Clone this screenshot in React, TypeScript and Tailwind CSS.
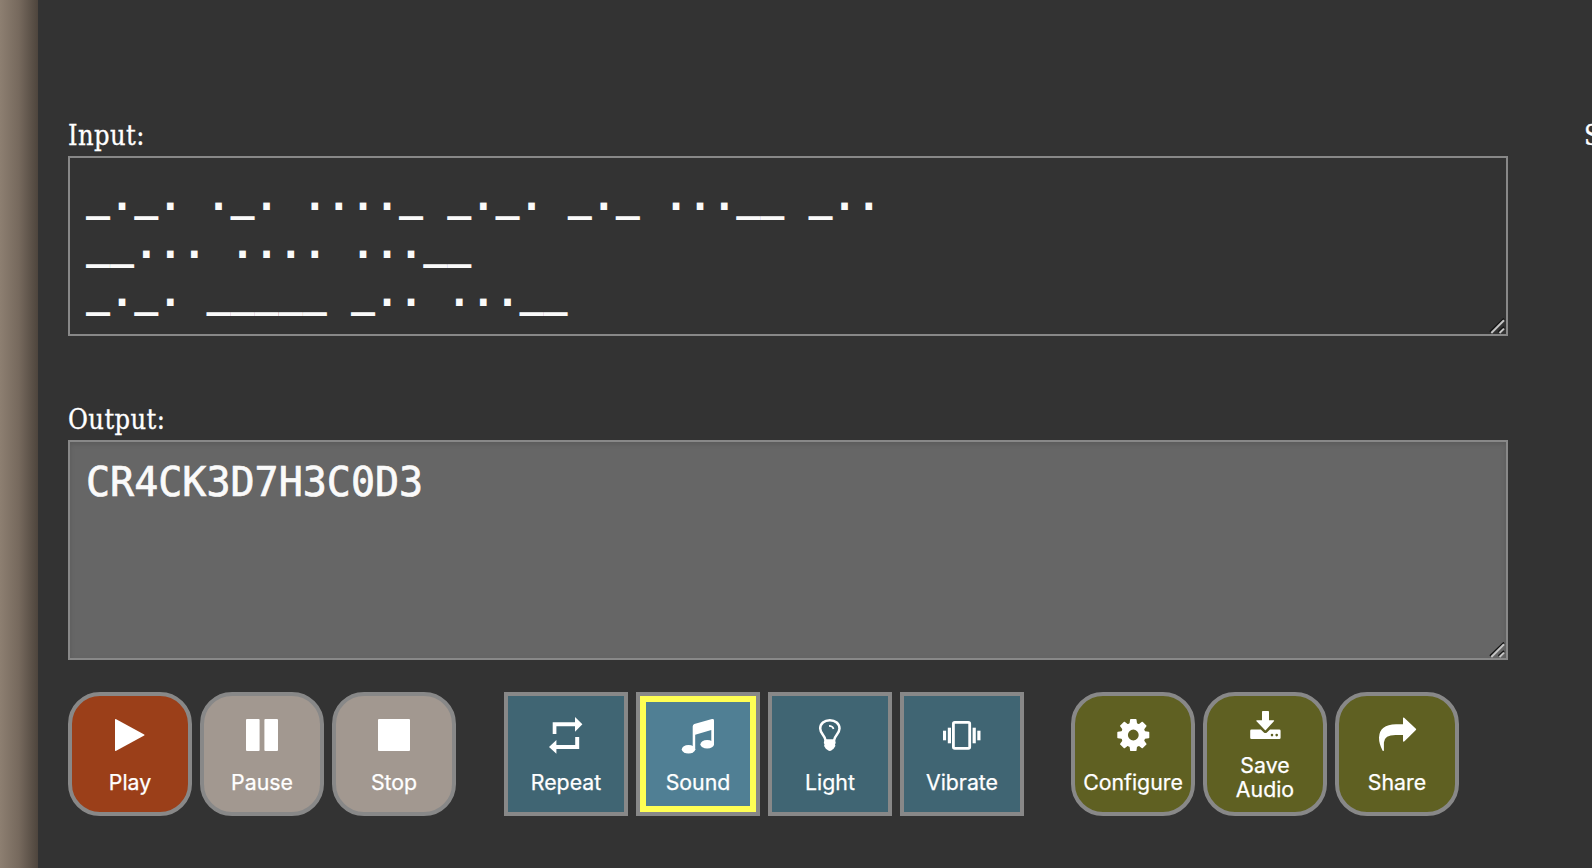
import type { ReactNode } from "react";

const icon = (children: ReactNode) => (
  <svg width="40" height="40" viewBox="0 0 40 40" fill="currentColor" className="shrink-0 overflow-visible">
    {children}
  </svg>
);

const PlayIcon = icon(<path d="M5 5.8Q5 4.6 6.2 5.2L34.2 20.5Q35 21 34.2 21.5L6.2 36.8Q5 37.4 5 36.2Z" />);
const PauseIcon = icon(
  <>
    <rect x="4" y="5" width="13.6" height="32" rx="1" />
    <rect x="22.4" y="5" width="13.6" height="32" rx="1" />
  </>
);
const StopIcon = icon(<rect x="4" y="5" width="32" height="32" rx="1" />);
const RepeatIcon = icon(
  <>
    <path d="M6.7 19.9V8.2H29V3L36.4 10.3L29 17.7V12.2H10.4V19.9Z" />
    <path d="M33.2 23V35H10.4V39.8L3 33L10.4 26V31H29.2V23Z" />
  </>
);
const SoundIcon = icon(
  <>
    <path d="M14.7 36V12.4Q14.7 10.7 16.3 10.1L34 5.1Q36 4.6 36 6.4V30.5H33.3V16L17.2 20.8V36Z" />
    <ellipse cx="10.5" cy="35.3" rx="6.7" ry="4.3" />
    <ellipse cx="29.2" cy="30.2" rx="6.8" ry="4.3" />
  </>
);
const LightIcon = icon(
  <>
    <path
      d="M15.6 26.5C15.2 21.5 10.2 19.7 10.2 14.6C10.2 9.6 14.3 6.2 19.8 6.2S29.5 9.6 29.5 14.6C29.5 19.7 24.4 21.5 24 26.5"
      fill="none"
      stroke="currentColor"
      strokeWidth="2.5"
    />
    <path d="M14.5 25.3H25L25.7 29L25 30.3L25.4 32L23.4 35Q22.5 35.5 21.7 36.3Q19.8 37.7 17.9 36.3Q17 35.5 16 35L14.1 32L14.5 30.3L13.8 29Z" />
    <path d="M19 11.9Q22.6 11.9 23.6 14.9" fill="none" stroke="currentColor" strokeWidth="1.6" />
  </>
);
const VibrateIcon = icon(
  <>
    <rect x="11.4" y="8.4" width="16.3" height="26" rx="1.4" fill="none" stroke="currentColor" strokeWidth="2.8" />
    <rect x="1" y="16.7" width="3.1" height="9.6" />
    <rect x="5.8" y="13.7" width="3.2" height="15.6" />
    <rect x="30.6" y="13.7" width="3.2" height="15.6" />
    <rect x="35.3" y="16.7" width="3.2" height="9.6" />
  </>
);
const ConfigureIcon = icon(
  <>
    <circle cx="20.3" cy="21" r="8.8" fill="none" stroke="currentColor" strokeWidth="6.8" />
    {[0, 45, 90, 135, 180, 225, 270, 315].map((a) => (
      <path key={a} transform={`rotate(${a} 20.3 21)`} d="M15.8 10.8L16.6 9.2L17.1 5.6Q17.2 5 17.8 5H22.8Q23.4 5 23.5 5.6L24 9.2L24.8 10.8Z" />
    ))}
  </>
);
const SaveIcon = icon(
  <>
    <path d="M17.8 5H23.2Q24 5 24 5.8V14.3H28.6Q29.6 14.4 28.9 15.2L20.9 23.9Q20.4 24.4 19.9 23.9L11.5 15.2Q10.8 14.4 11.8 14.3H17V5.8Q17 5 17.8 5Z" />
    <path
      fillRule="evenodd"
      d="M6.5 23.5H15.8L18.9 26.4Q20.4 27.5 21.9 26.4L25 23.5H34.3Q35.6 23.5 35.6 24.8V31.7Q35.6 33 34.3 33H6.5Q5.2 33 5.2 31.7V24.8Q5.2 23.5 6.5 23.5ZM27 27.8A1.3 1.3 0 1 0 27 30.4A1.3 1.3 0 1 0 27 27.8ZM31.7 27.8A1.3 1.3 0 1 0 31.7 30.4A1.3 1.3 0 1 0 31.7 27.8Z"
    />
  </>
);
const ShareIcon = icon(
  <path d="M26 10.2V4.3Q26 2.8 27.2 3.8L38.9 14.7Q39.5 15.4 38.9 16L27.5 27.3Q26 28.4 26 27V21H18.5Q7.5 21 6.9 28.4L6.9 36.2Q6.4 37.8 5.5 36.4Q1.9 29.5 2 23.5Q2.5 10.4 19 10.2Z" />
);

type Tone = "play" | "idle" | "toggle" | "active" | "tool";
const tones: Record<Tone, string> = {
  play: "rounded-[32px] bg-[#9b3f19]",
  idle: "rounded-[32px] bg-[#a29890]",
  toggle: "bg-[#406573]",
  active: "bg-[#507f94] shadow-[inset_0_0_0_6px_#ffff54]",
  tool: "rounded-[32px] bg-[#5f6022]",
};

function ControlButton({ tone, glyph, label, wrapped = false }: { tone: Tone; glyph: ReactNode; label: string; wrapped?: boolean }) {
  return (
    <button
      className={`flex size-[124px] shrink-0 flex-col items-center justify-center border-4 border-[#888] text-white ${tones[tone]} ${wrapped ? "gap-[7px] pb-[2px]" : "gap-4"}`}
    >
      {glyph}
      <span
        className={`text-center font-['Inter',sans-serif] text-[21.3px] leading-6 [-webkit-text-stroke:0.25px_white] ${wrapped ? "w-20" : "whitespace-nowrap"}`}
      >
        {label}
      </span>
    </button>
  );
}

const labelText =
  "font-['DejaVu_Serif_Condensed','DejaVu_Serif',serif] text-[27px] leading-10 tracking-[0.42px] text-white [font-stretch:condensed] [-webkit-text-stroke:0.3px_white]";

function Field({ label, value, height, area }: { label: string; value: string; height: string; area: string }) {
  return (
    <div className="w-[1440px] shrink-0">
      <label className={`block h-10 ${labelText}`}>{label}</label>
      <div className="relative">
        <textarea
          readOnly
          spellCheck={false}
          value={value}
          className={`block w-full resize-none overflow-hidden border-2 border-[#888] px-4 font-['DejaVu_Sans_Mono',monospace] text-[40px] leading-[48px] text-[#fafafa] outline-none ${height} ${area}`}
        />
        <svg width="16" height="16" viewBox="0 0 16 16" className="absolute right-[3px] bottom-[2px]" fill="none">
          <path d="M1 14L15 0.5M9.5 14L15 9" stroke="#151515" strokeWidth="1.8" />
          <path d="M2.3 15L15 2.3M10.5 15L15 10.6" stroke="#c4c4c4" strokeWidth="2" />
        </svg>
      </div>
    </div>
  );
}

const morse = "_._. ._. ...._ _._. _._ ...__ _..\n__... .... ...__\n_._. _____ _.. ...__";

export default function App() {
  return (
    <div className="flex h-[868px] w-[1592px] overflow-hidden bg-[#333]">
      <div className="w-[38px] shrink-0 bg-linear-to-r from-[#8d7f71] via-[#76695d] to-[#4e453d]" />
      <main className="flex flex-col pt-[116px] pl-[30px]">
        <div className="flex gap-[76px]">
          <Field label="Input:" value={morse} height="h-[180px]" area="bg-[#333] pt-[14px] font-bold" />
          <span className={labelText}>S</span>
        </div>
        <div className="mt-16">
          <Field
            label="Output:"
            value="CR4CK3D7H3C0D3"
            height="h-[220px]"
            area="bg-[#666] pt-4 shadow-[inset_0_2px_5px_rgba(0,0,0,0.12)] [-webkit-text-stroke:0.7px_#fafafa]"
          />
        </div>
        <div className="mt-8 flex">
          <div className="flex gap-2">
            <ControlButton tone="play" glyph={PlayIcon} label="Play" />
            <ControlButton tone="idle" glyph={PauseIcon} label="Pause" />
            <ControlButton tone="idle" glyph={StopIcon} label="Stop" />
          </div>
          <div className="ml-12 flex gap-2">
            <ControlButton tone="toggle" glyph={RepeatIcon} label="Repeat" />
            <ControlButton tone="active" glyph={SoundIcon} label="Sound" />
            <ControlButton tone="toggle" glyph={LightIcon} label="Light" />
            <ControlButton tone="toggle" glyph={VibrateIcon} label="Vibrate" />
          </div>
          <div className="ml-[47px] flex gap-2">
            <ControlButton tone="tool" glyph={ConfigureIcon} label="Configure" />
            <ControlButton tone="tool" glyph={SaveIcon} label="Save Audio" wrapped />
            <ControlButton tone="tool" glyph={ShareIcon} label="Share" />
          </div>
        </div>
      </main>
    </div>
  );
}
